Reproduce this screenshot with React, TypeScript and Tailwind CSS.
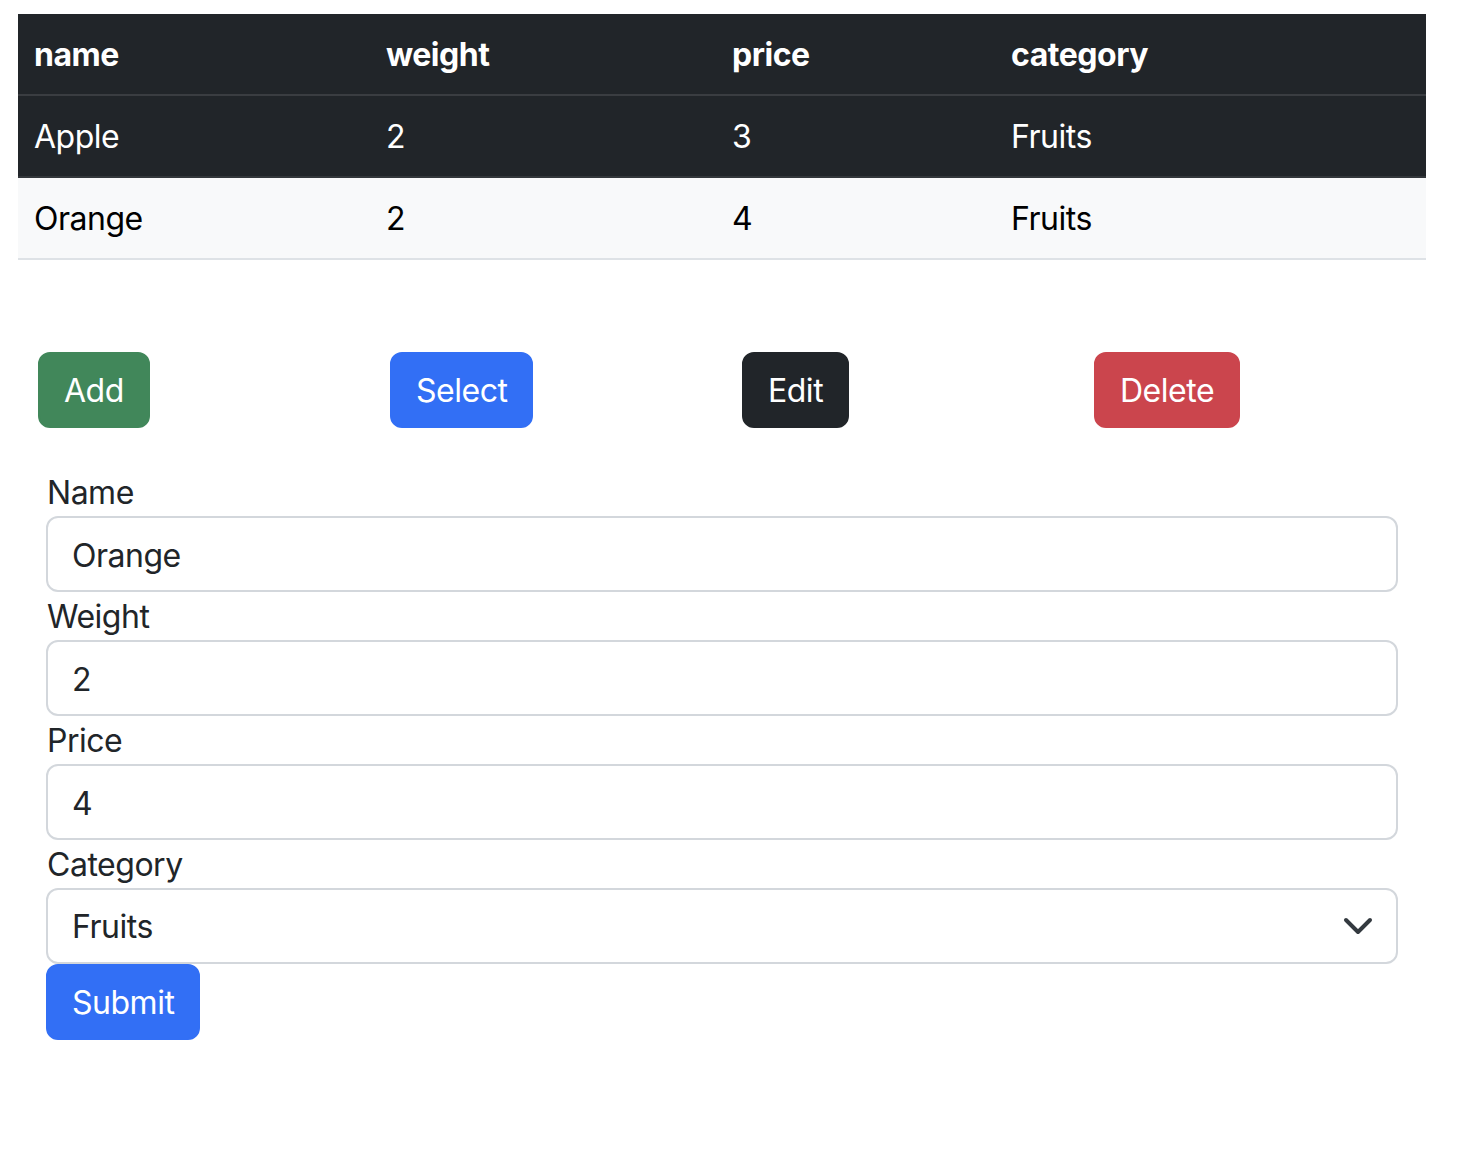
const rows = [
  { name: "Apple", weight: 2, price: 3, category: "Fruits" },
  { name: "Orange", weight: 2, price: 4, category: "Fruits" },
];

const fields = [
  { label: "Name", value: "Orange" },
  { label: "Weight", value: "2" },
  { label: "Price", value: "4" },
];

export default function App() {
  return (
    <div className="min-h-screen bg-white pl-[18px] pt-[14px] font-['Inter',sans-serif] text-[32px] leading-[48px] tracking-[-0.015em] text-[#212529]">
      <table className="w-[1408px] table-fixed border-collapse">
        <colgroup>
          <col className="w-[352px]" />
          <col className="w-[346px]" />
          <col className="w-[279px]" />
          <col className="w-[431px]" />
        </colgroup>
        <thead>
          <tr className="bg-[#212529] text-white">
            <th className="border-b-2 border-[#3a3d41] px-4 pt-[17px] pb-[15px] text-left font-bold">name</th>
            <th className="border-b-2 border-[#3a3d41] px-4 pt-[17px] pb-[15px] text-left font-bold">weight</th>
            <th className="border-b-2 border-[#3a3d41] px-4 pt-[17px] pb-[15px] text-left font-bold">price</th>
            <th className="border-b-2 border-[#3a3d41] px-4 pt-[17px] pb-[15px] text-left font-bold">category</th>
          </tr>
        </thead>
        <tbody>
          {rows.map((row, i) => (
            <tr
              key={row.name}
              className={
                i === 0
                  ? "border-b-2 border-[#33373b] bg-[#212529] text-white"
                  : "border-b-2 border-[#dee2e6] bg-[#f8f9fa] text-black"
              }
            >
              <td className="px-4 pt-[17px] pb-[15px]">{row.name}</td>
              <td className="px-4 pt-[17px] pb-[15px]">{row.weight}</td>
              <td className="px-4 pt-[17px] pb-[15px]">{row.price}</td>
              <td className="px-4 pt-[17px] pb-[15px]">{row.category}</td>
            </tr>
          ))}
        </tbody>
      </table>

      <div className="mt-[92px] grid w-[1408px] grid-cols-4">
        <div className="pl-5">
          <button type="button" className="rounded-[12px] border-2 border-[#41875a] bg-[#41875a] px-6 pt-[13px] pb-[11px] text-white">
            Add
          </button>
        </div>
        <div className="pl-5">
          <button type="button" className="rounded-[12px] border-2 border-[#326ff5] bg-[#326ff5] px-6 pt-[13px] pb-[11px] text-white">
            Select
          </button>
        </div>
        <div className="pl-5">
          <button type="button" className="rounded-[12px] border-2 border-[#212529] bg-[#212529] px-6 pt-[13px] pb-[11px] text-white">
            Edit
          </button>
        </div>
        <div className="pl-5">
          <button type="button" className="rounded-[12px] border-2 border-[#cb454d] bg-[#cb454d] px-6 pt-[13px] pb-[11px] text-white">
            Delete
          </button>
        </div>
      </div>

      <form className="mt-10 ml-[28px] w-[1352px]">
        {fields.map((f) => (
          <div key={f.label}>
            <label className="block pl-[1px] pt-[1px] pb-[-1px] leading-[47px]">{f.label}</label>
            <input
              readOnly
              value={f.value}
              className="block h-[76px] w-full rounded-[12px] border-2 border-[#d3d7dc] bg-white px-6 pt-[2px] text-[#212529] outline-none"
            />
          </div>
        ))}
        <div>
          <label className="block pl-[1px] pt-[1px] leading-[47px]">Category</label>
          <div className="relative">
            <select
              defaultValue="Fruits"
              className="block h-[76px] w-full appearance-none rounded-[12px] border-2 border-[#d3d7dc] bg-white px-6 pt-[2px] text-[#212529] outline-none"
            >
              <option>Fruits</option>
              <option>Vegetables</option>
            </select>
            <svg
              className="pointer-events-none absolute right-[24px] top-1/2 h-[24px] w-[32px] -translate-y-1/2"
              viewBox="0 0 16 12"
              fill="none"
              stroke="#343a40"
              strokeWidth="2"
              strokeLinecap="round"
              strokeLinejoin="round"
            >
              <path d="m2 3 6 6 6-6" />
            </svg>
          </div>
        </div>
        <button type="submit" className="rounded-[12px] border-2 border-[#326ff5] bg-[#326ff5] px-6 pt-[13px] pb-[11px] text-white">
          Submit
        </button>
      </form>
    </div>
  );
}
